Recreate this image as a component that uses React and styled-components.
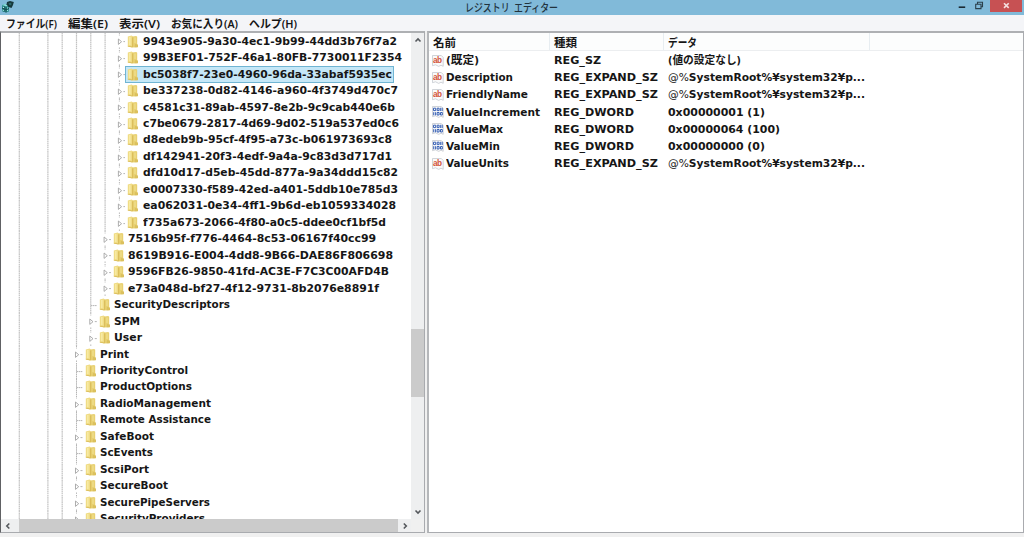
import React, { useLayoutEffect, useRef } from 'react'
import styled, { createGlobalStyle } from 'styled-components'

const GlobalStyle = createGlobalStyle`
  * {
    box-sizing: border-box;
  }

  body {
    margin: 0;
    overflow: hidden;
    font-family: "DejaVu Sans Condensed", "Noto Sans", "Noto Sans CJK JP", sans-serif;
    font-size: 11.2px;
    color: #161616;
  }
`

const Window = styled.div`
  width: 1024px;
  height: 537px;
  display: flex;
  flex-direction: column;
  background: #f0f0f0;
  overflow: hidden;
`

const TitleBar = styled.header`
  position: relative;
  flex: 0 0 15px;
  display: flex;
  align-items: flex-start;
  justify-content: space-between;
  background: #81bad9;
`

const AppIcon = styled.svg`
  width: 14px;
  height: 13px;
  margin-left: 1px;
`

const Title = styled.h1`
  position: absolute;
  top: -1px;
  left: 465px;
  margin: 0;
  font-family: "Noto Sans CJK JP", sans-serif;
  font-size: 11px;
  word-spacing: 3px;
  line-height: 14px;
  font-weight: 500;
  color: #22333d;
`

const Controls = styled.div`
  display: flex;
  height: 12px;
  padding-right: 2px;
`

const Control = styled.button`
  width: ${(p) => p.$width}px;
  height: 12px;
  padding: 0;
  border: 0;
  display: flex;
  background: ${(p) => (p.$close ? '#c75153' : 'transparent')};
`

const MenuBar = styled.nav`
  flex: 0 0 16px;
  min-height: 0;
  display: flex;
  gap: 11px;
  padding: 1px 0 0 6px;
  background: #f4f5f8;
  font-family: "Noto Sans", "Noto Sans CJK JP", sans-serif;
  font-size: 11.5px;
  font-weight: 600;
`

const Body = styled.main`
  flex: 0 0 502px;
  display: flex;
  gap: 2px;
  border-bottom: 1px solid #f0f0f0;
`

const TreePane = styled.section`
  width: 425px;
  display: grid;
  grid-template-columns: 410px 13px;
  grid-template-rows: 486px 13px;
  border: 1px solid #a9abaf;
  border-left: 1px solid #606164;
  border-top: 2px solid #aeb0b3;
  background: #f0f0f0;
`

const Tree = styled.div`
  background: #fff;
  padding-top: 0.4px;
  overflow: hidden;
`

const TreeRow = styled.div`
  height: 16.47px;
  display: flex;
  align-items: center;
`

const Guides = styled.svg`
  flex: none;
  width: ${(p) => p.$width}px;
  height: 16.47px;
`

const NodeLabel = styled.div`
  height: 16.47px;
  display: flex;
  align-items: center;
  padding: 0 1px;
  border: 1px solid ${(p) => (p.$selected ? '#70b5d3' : 'transparent')};
  background: ${(p) => (p.$selected ? '#c5e7f7' : 'transparent')};
  font-weight: 700;
`

const Folder = styled.svg`
  flex: none;
  width: 12px;
  height: 13px;
  margin: -1px 3.4px 0 0;
`

const ScrollBar = styled.div`
  display: flex;
  flex-direction: ${(p) => (p.$vertical ? 'column' : 'row')};
  background: #eeeff0;
`

const Thumb = styled.div`
  flex: 0 0 ${(p) => p.$size}px;
  background: #cbcbcb;
`

const ScrollButton = styled.div`
  flex: 0 0 ${(p) => p.$size}px;
  display: flex;
  align-items: center;
  justify-content: center;
  margin: ${(p) => p.$margin || 0};
`

const ListPane = styled.section`
  flex: 1;
  border: 1px solid #a9abaf;
  border-left: 2px solid #b5b7ba;
  border-top: 2px solid #aeb0b3;
  background: #fff;
`

const ListHeader = styled.div`
  display: flex;
  height: 18px;
  border-bottom: 1px solid #eceef0;
  background: #fcfdfd;
  font-family: "Noto Sans CJK JP", sans-serif;
  font-size: 11.5px;
  font-weight: 600;
`

const HeaderCell = styled.div`
  width: ${(p) => p.$width}px;
  padding: 1px 0 0 4px;
  border-right: 1px solid #e7edf1;
`

const ValueRow = styled.div`
  display: grid;
  grid-template-columns: 125px 114px 1fr;
  height: 17.2px;
  padding-top: 2px;
  align-items: center;
  justify-items: start;
  font-weight: 700;
`

const ValueName = styled.div`
  display: flex;
  align-items: center;
  padding-left: 3px;
`

const TypeIcon = styled.svg`
  flex: none;
  width: 12px;
  height: 12px;
  margin: -1px 2px 0 0;
`

const FitSpan = styled.span`
  display: inline-block;
  white-space: pre;
  transform-origin: 0 50%;
  line-height: 16px;
`

const Light = styled.span`
  font-weight: 400;
`

// Stretches or condenses the glyphs so the text takes an exact width
const Fit = ({ width, children }) => {
  const ref = useRef(null)

  useLayoutEffect(() => {
    const el = ref.current
    el.style.width = 'max-content'
    el.style.transform = 'none'
    const natural = el.getBoundingClientRect().width
    el.style.transform = `scaleX(${width / natural})`
    el.style.width = `${width}px`
  }, [width])

  return <FitSpan ref={ref}>{children}</FitSpan>
}

const menus = [
  ['ファイル(F)', 51],
  ['編集(E)', 40],
  ['表示(V)', 41],
  ['お気に入り(A)', 67],
  ['ヘルプ(H)', 48],
]

// [label, depth, text width, expandable, selected]
const nodes = [
  ['9943e905-9a30-4ec1-9b99-44dd3b76f7a2', 7, 254, true],
  ['99B3EF01-752F-46a1-80FB-7730011F2354', 7, 259, true],
  ['bc5038f7-23e0-4960-96da-33abaf5935ec', 7, 249, true, true],
  ['be337238-0d82-4146-a960-4f3749d470c7', 7, 255, true],
  ['c4581c31-89ab-4597-8e2b-9c9cab440e6b', 7, 252, true],
  ['c7be0679-2817-4d69-9d02-519a537ed0c6', 7, 256, true],
  ['d8edeb9b-95cf-4f95-a73c-b061973693c8', 7, 249, true],
  ['df142941-20f3-4edf-9a4a-9c83d3d717d1', 7, 249, true],
  ['dfd10d17-d5eb-45dd-877a-9a34ddd15c82', 7, 255, true],
  ['e0007330-f589-42ed-a401-5ddb10e785d3', 7, 255, true],
  ['ea062031-0e34-4ff1-9b6d-eb1059334028', 7, 253, true],
  ['f735a673-2066-4f80-a0c5-ddee0cf1bf5d', 7, 243, true],
  ['7516b95f-f776-4464-8c53-06167f40cc99', 6, 248, true],
  ['8619B916-E004-4dd8-9B66-DAE86F806698', 6, 265, true],
  ['9596FB26-9850-41fd-AC3E-F7C3C00AFD4B', 6, 261, true],
  ['e73a048d-bf27-4f12-9731-8b2076e8891f', 6, 251, true],
  ['SecurityDescriptors', 5, 116, false],
  ['SPM', 5, 26, true],
  ['User', 5, 28, true],
  ['Print', 4, 29, true],
  ['PriorityControl', 4, 88, false],
  ['ProductOptions', 4, 92, false],
  ['RadioManagement', 4, 111, true],
  ['Remote Assistance', 4, 111, false],
  ['SafeBoot', 4, 54, true],
  ['ScEvents', 4, 53, false],
  ['ScsiPort', 4, 49, true],
  ['SecureBoot', 4, 68, true],
  ['SecurePipeServers', 4, 110, true],
  ['SecurityProviders', 4, 105, true],
]

const values = [
  ['sz', '(既定)', 33, 'REG_SZ', 47, '(値の設定なし)', 73],
  ['sz', 'Description', 67, 'REG_EXPAND_SZ', 104, '¥system32¥p...', 197],
  ['sz', 'FriendlyName', 82, 'REG_EXPAND_SZ', 104, '¥system32¥p...', 197],
  ['dword', 'ValueIncrement', 94, 'REG_DWORD', 80, '0x00000001 (1)', 97],
  ['dword', 'ValueMax', 57, 'REG_DWORD', 80, '0x00000064 (100)', 112],
  ['dword', 'ValueMin', 54, 'REG_DWORD', 80, '0x00000000 (0)', 97],
  ['sz', 'ValueUnits', 63, 'REG_EXPAND_SZ', 104, '¥system32¥p...', 197],
]

const columnX = (n) => 18.3 + n * 14.3

const TreeGuides = ({ depth, expandable }) => {
  const width = columnX(depth) + 6
  const x = columnX(depth)
  const columns = [0, 2, 3, 4, 5, 6].filter((n) => n < depth)
  return (
    <Guides $width={width} viewBox={`0 0 ${width} 16.47`}>
      {columns.map((n) => (
        <path key={n} d={`M${columnX(n)} 0V16.47`} stroke="#c2c2c2" strokeWidth="1.2" strokeDasharray="1.6 .5" />
      ))}
      {expandable ? (
        <>
          <path d={`M${x} 0V2.5M${x} 14.5V16.47`} stroke="#b5b5b5" strokeDasharray="1.4 .6" />
          <path d={`M${x - 1} 6L${x + 2.2} 8.7L${x - 1} 11.4Z`} fill="#fff" stroke="#a4a4a4" strokeWidth=".9" />
          <path d={`M${x + 4} 8.6H${width}`} stroke="#b5b5b5" />
        </>
      ) : (
        <path d={`M${x} 0V16.47M${x} 8.6H${width}`} stroke="#b5b5b5" strokeDasharray="1.6 .5" />
      )}
    </Guides>
  )
}

const FolderIcon = () => (
  <Folder viewBox="0 0 12 13">
    <path d="M.8 1.6L4.6 .6L6 1.4V12.6L.8 11.6Z" fill="#f0dc85" />
    <path d="M5.4 1.6L9.2 1L10.2 1.8V8.6L10 12.2L5.4 12.6Z" fill="#e8d071" />
    <path d="M5.6 2.4V12" stroke="#d3b552" strokeWidth=".8" />
    <path d="M2.8 2V10" stroke="#f7eaa3" strokeWidth="1.6" />
    <path d="M8 2.4V8" stroke="#f0df8e" strokeWidth="1.3" />
    <path d="M.8 10.8L5.2 11.6V12.4L.8 11.6Z" fill="#d9bc59" />
    <path d="M8 9L11 9.4V12.2H7.6Z" fill="#dbc05e" />
  </Folder>
)

const ValueIcon = ({ type }) => (
  <TypeIcon viewBox="0 0 12 12">
    <path d="M.5 .5H9.3L11.2 2.4V11.3L9 10.2L6.7 11.4L3.5 9.8L.5 10.7Z" fill="#fafafa" stroke="#c5c9cf" strokeWidth=".8" />
    {type === 'sz' ? (
      <text x="1" y="7.8" fontFamily="Liberation Sans" fontSize="8.2" fontWeight="700" textLength="9" fill="#d2533b">ab</text>
    ) : (
      <g fill="none" stroke="#3861b5" strokeWidth="1">
        <path d="M1.5 2.2H3.7V4.6H1.5ZM5.2 2.2H7.1V4.6H5.2ZM8.7 1.8V5M10.2 1.8V5" />
        <path d="M1.7 6.2V9.3M3.4 6.2V9.3M5.1 6.5H7.1V9H5.1ZM8.5 6.5H10.3V9H8.5Z" />
      </g>
    )}
  </TypeIcon>
)

const chevrons = {
  up: 'M1.5 5.5L4 3L6.5 5.5',
  down: 'M1.5 2.5L4 5L6.5 2.5',
  left: 'M5.3 1.5L2.8 4L5.3 6.5',
  right: 'M2.8 1.5L5.3 4L2.8 6.5',
}

const Chevron = ({ dir }) => (
  <svg width="8" height="8" viewBox="0 0 8 8">
    <path d={chevrons[dir]} fill="none" stroke="#55585c" strokeWidth="1.6" />
  </svg>
)

const App = () => (
  <Window>
    <GlobalStyle />
    <TitleBar>
      <AppIcon viewBox="0 0 14 13">
        <path d="M1 5L4 4L8 5.5V11.5L5 12.5L1 11.2Z" fill="#2d8f91" />
        <path d="M1 5L4 4L8 5.5L5 6.5Z" fill="#8be0dc" />
        <path d="M1 8.2L5 9.5L8 8.5M3 5.8V11.7M5 6.5V12.5" stroke="#123c40" strokeWidth=".8" fill="none" />
        <path d="M6 2L9 1L12.8 2L12 5L10.5 8L7.5 7L5.5 4.5Z" fill="#16383b" />
        <path d="M7.5 3.5L9.5 2.7L10.8 4L9 5.4Z" fill="#2d6b6c" />
        <path d="M2.5 6.8V8M6.5 7.5V8.5M2.3 9.8V11M6.6 10V11" stroke="#aaf0e7" />
      </AppIcon>
      <Title><Fit width={93}>レジストリ エディター</Fit></Title>
      <Controls>
        <Control $width={19} aria-label="最小化">
          <svg width="19" height="12"><path d="M4.7 7.2H11.2" stroke="#1b2a33" strokeWidth="1.6" /></svg>
        </Control>
        <Control $width={17} aria-label="元に戻す">
          <svg width="17" height="12">
            <path d="M2.7 4.3H8V8.6H2.7ZM4.5 4V2.3H9.5V6.7H8" fill="none" stroke="#2b404b" strokeWidth="1.1" />
          </svg>
        </Control>
        <Control $width={32} $close aria-label="閉じる">
          <svg width="32" height="12"><path d="M14 3.2L18.7 7.9M18.7 3.2L14 7.9" stroke="#f5dfe0" strokeWidth="1.6" /></svg>
        </Control>
      </Controls>
    </TitleBar>

    <MenuBar>
      {menus.map(([label, width]) => (
        <Fit key={label} width={width}>{label}</Fit>
      ))}
    </MenuBar>

    <Body>
      <TreePane>
        <Tree>
          {nodes.map(([label, depth, width, expandable, selected]) => (
            <TreeRow key={label}>
              <TreeGuides depth={depth} expandable={expandable} />
              <NodeLabel $selected={selected}>
                <FolderIcon />
                <Fit width={width}>{label}</Fit>
              </NodeLabel>
            </TreeRow>
          ))}
        </Tree>
        <ScrollBar $vertical>
          <ScrollButton $size={14}><Chevron dir="up" /></ScrollButton>
          <ScrollButton $size={282} />
          <Thumb $size={68} />
          <ScrollButton $size={14} $margin="auto 0 0"><Chevron dir="down" /></ScrollButton>
        </ScrollBar>
        <ScrollBar>
          <ScrollButton $size={14} $margin="0 4px 0 0"><Chevron dir="left" /></ScrollButton>
          <Thumb $size={379} />
          <ScrollButton $size={13}><Chevron dir="right" /></ScrollButton>
        </ScrollBar>
      </TreePane>

      <ListPane>
        <ListHeader>
          <HeaderCell $width={121}><Fit width={23}>名前</Fit></HeaderCell>
          <HeaderCell $width={114}><Fit width={23}>種類</Fit></HeaderCell>
          <HeaderCell $width={206}><Fit width={29}>データ</Fit></HeaderCell>
        </ListHeader>
        {values.map(([icon, name, nameWidth, type, typeWidth, data, dataWidth]) => (
          <ValueRow key={name}>
            <ValueName>
              <ValueIcon type={icon} />
              <Fit width={nameWidth}>{name}</Fit>
            </ValueName>
            <Fit width={typeWidth}>{type}</Fit>
            <Fit width={dataWidth}>
              {data.startsWith('¥') && <><Light>@%</Light>SystemRoot%</>}
              {data}
            </Fit>
          </ValueRow>
        ))}
      </ListPane>
    </Body>
  </Window>
)

export default App
